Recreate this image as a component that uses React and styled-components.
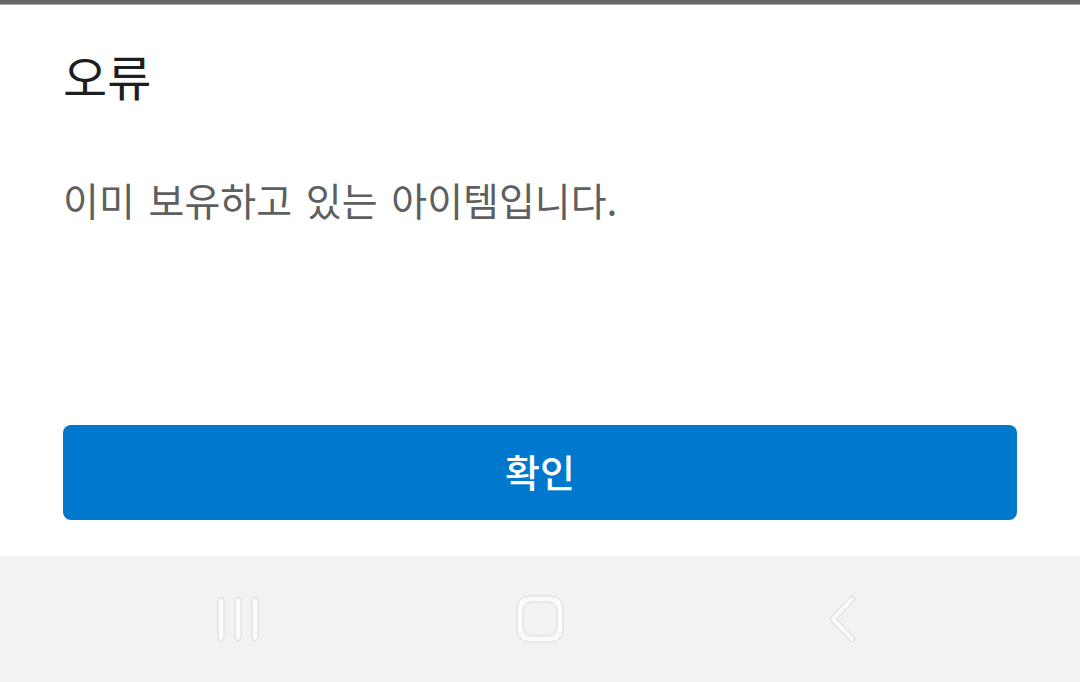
import React from "react";
import styled, { createGlobalStyle } from "styled-components";

const Global = createGlobalStyle`
  html, body { margin: 0; padding: 0; background: #ffffff; }
  body { font-family: "Noto Sans CJK KR", "Noto Sans", sans-serif; }
  #root { width: 1080px; height: 682px; }
`;

const Screen = styled.div`
  width: 1080px;
  height: 682px;
  display: flex;
  flex-direction: column;
  background: #ffffff;
  overflow: hidden;
`;

const TopBar = styled.div`
  height: 4px;
  background: #666666;
  border-bottom: 1px solid #a8a8a8;
  flex: none;
`;

const Dialog = styled.div`
  flex: 1;
  display: flex;
  flex-direction: column;
  padding: 0 63px;
`;

const Title = styled.h1`
  margin: 38px 0 0;
  font-size: 48px;
  line-height: 64px;
  font-weight: 400;
  color: #1e1e1e;
  letter-spacing: 0;
`;

const Message = styled.p`
  margin: 64px 0 0;
  font-size: 39px;
  line-height: 56px;
  font-weight: 400;
  color: #5e5f61;
  letter-spacing: 0;
  word-spacing: 5px;
`;

const ConfirmButton = styled.button`
  margin-top: auto;
  margin-bottom: 36px;
  height: 95px;
  width: 954px;
  border: none;
  border-radius: 8px;
  background: #0078cd;
  color: #ffffff;
  font-family: "Noto Sans CJK KR", "Noto Sans", sans-serif;
  font-size: 38px;
  font-weight: 500;
  letter-spacing: 0;
  display: flex;
  align-items: center;
  justify-content: center;
  padding: 0 0 4px;
`;

const NavBar = styled.div`
  height: 126px;
  flex: none;
  background: #f2f2f0;
  display: grid;
  grid-template-columns: repeat(3, 302px);
  justify-content: center;
  align-items: center;
  justify-items: center;
`;

const NavSlot = styled.div`
  display: flex;
  align-items: center;
  justify-content: center;
`;

const stroke = "#d9d9d9";
const fill = "#fbfbfb";

const RecentsIcon = () => (
  <svg width="46" height="46" viewBox="0 0 46 46">
    {[3, 20, 37].map((x) => (
      <rect key={x} x={x} y="1.5" width="6" height="43" rx="3" fill={fill} stroke={stroke} strokeWidth="1" />
    ))}
  </svg>
);

const HomeIcon = () => (
  <svg width="50" height="50" viewBox="0 0 50 50">
    <path
      fillRule="evenodd"
      d="M14 2 H36 A12 12 0 0 1 48 14 V36 A12 12 0 0 1 36 48 H14 A12 12 0 0 1 2 36 V14 A12 12 0 0 1 14 2 Z M16 8 A8 8 0 0 0 8 16 V34 A8 8 0 0 0 16 42 H34 A8 8 0 0 0 42 34 V16 A8 8 0 0 0 34 8 Z"
      fill={fill}
      stroke={stroke}
      strokeWidth="1"
    />
  </svg>
);

const BackIcon = () => (
  <svg width="34" height="48" viewBox="0 0 34 48">
    <path
      d="M27 4 L8 24 L27 44"
      fill="none"
      stroke={stroke}
      strokeWidth="6"
      strokeLinecap="round"
      strokeLinejoin="round"
    />
    <path
      d="M27 4 L8 24 L27 44"
      fill="none"
      stroke={fill}
      strokeWidth="4"
      strokeLinecap="round"
      strokeLinejoin="round"
    />
  </svg>
);

export default function App() {
  return (
    <>
      <Global />
      <Screen>
        <TopBar />
        <Dialog>
          <Title>오류</Title>
          <Message>이미 보유하고 있는 아이템입니다.</Message>
          <ConfirmButton>확인</ConfirmButton>
        </Dialog>
        <NavBar>
          <NavSlot><RecentsIcon /></NavSlot>
          <NavSlot><HomeIcon /></NavSlot>
          <NavSlot><BackIcon /></NavSlot>
        </NavBar>
      </Screen>
    </>
  );
}
